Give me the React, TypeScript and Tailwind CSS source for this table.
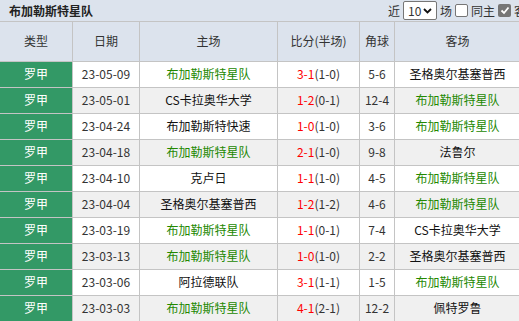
import React from "react";

type Row = {
  date: string;
  home: string;
  homeHit?: boolean;
  ft: string;
  ht: string;
  corner: string;
  away: string;
  awayHit?: boolean;
};

const rows: Row[] = [
  { date: "23-05-09", home: "布加勒斯特星队", homeHit: true, ft: "3-1", ht: "(1-0)", corner: "5-6", away: "圣格奥尔基塞普西" },
  { date: "23-05-01", home: "CS卡拉奥华大学", ft: "1-2", ht: "(0-1)", corner: "12-4", away: "布加勒斯特星队", awayHit: true },
  { date: "23-04-24", home: "布加勒斯特快速", ft: "1-0", ht: "(1-0)", corner: "3-6", away: "布加勒斯特星队", awayHit: true },
  { date: "23-04-18", home: "布加勒斯特星队", homeHit: true, ft: "2-1", ht: "(1-0)", corner: "9-8", away: "法鲁尔" },
  { date: "23-04-10", home: "克卢日", ft: "1-1", ht: "(1-0)", corner: "4-5", away: "布加勒斯特星队", awayHit: true },
  { date: "23-04-04", home: "圣格奥尔基塞普西", ft: "1-2", ht: "(1-2)", corner: "4-6", away: "布加勒斯特星队", awayHit: true },
  { date: "23-03-19", home: "布加勒斯特星队", homeHit: true, ft: "1-1", ht: "(0-1)", corner: "7-4", away: "CS卡拉奥华大学" },
  { date: "23-03-13", home: "布加勒斯特星队", homeHit: true, ft: "1-0", ht: "(1-0)", corner: "2-2", away: "圣格奥尔基塞普西" },
  { date: "23-03-06", home: "阿拉德联队", ft: "3-1", ht: "(1-1)", corner: "1-5", away: "布加勒斯特星队", awayHit: true },
  { date: "23-03-03", home: "布加勒斯特星队", homeHit: true, ft: "4-1", ht: "(2-1)", corner: "12-2", away: "佩特罗鲁" },
];

const cell = "border border-[#c4c4c4] text-center p-0";

export default function App() {
  return (
    <div
      className="w-[519px] h-[321px] overflow-hidden bg-white text-[12px] text-[#333]"
      style={{ fontFamily: '"Noto Sans CJK SC", "Liberation Sans", sans-serif' }}
    >
      <div className="flex items-center h-[22px] bg-[#dce3ed] border-b border-[#c4c4c4] whitespace-nowrap">
        <div className="w-[388px] shrink-0 pl-[9px] font-bold text-[#222]">布加勒斯特星队</div>
        <div className="flex items-center shrink-0 gap-[3px] text-[#333]">
          <span>近</span>
          <div className="flex items-center justify-between w-[34px] h-[19px] bg-white border border-[#767676] rounded-[2px] px-[4px] text-[12px]">
            <span>10</span>
            <svg width="9" height="6" viewBox="0 0 9 6">
              <path d="M1 1l3.5 3.5L8 1" stroke="#111" strokeWidth="1.8" fill="none" />
            </svg>
          </div>
          <span>场</span>
          <span className="w-[13px] h-[13px] bg-white border border-[#767676] rounded-[2px]" />
          <span>同主</span>
          <span className="flex items-center justify-center w-[13px] h-[13px] bg-[#767676] rounded-[2px]">
            <svg width="10" height="9" viewBox="0 0 10 9">
              <path d="M1.5 4.5l2.5 2.5 4.5-5.5" stroke="#fff" strokeWidth="1.8" fill="none" />
            </svg>
          </span>
          <span>客场</span>
        </div>
      </div>
      <table className="border-collapse table-fixed w-[521px] -ml-px">
        <colgroup>
          <col className="w-[73px]" />
          <col className="w-[67px]" />
          <col className="w-[138px]" />
          <col className="w-[82px]" />
          <col className="w-[35px]" />
          <col className="w-[126px]" />
        </colgroup>
        <thead>
          <tr className="h-[39px] bg-[#dce3ed]">
            <th className={`${cell} border-t-0 font-normal`}>类型</th>
            <th className={`${cell} border-t-0 font-normal`}>日期</th>
            <th className={`${cell} border-t-0 font-normal`}>主场</th>
            <th className={`${cell} border-t-0 font-normal`}>比分(半场)</th>
            <th className={`${cell} border-t-0 font-normal`}>角球</th>
            <th className={`${cell} border-t-0 font-normal`}>客场</th>
          </tr>
        </thead>
        <tbody>
          {rows.map((r, i) => (
            <tr key={i} className={`h-[26px] ${i % 2 === 1 ? "bg-[#f0f0f0]" : "bg-white"}`}>
              <td className={`${cell} bg-[#339966] text-white`}>罗甲</td>
              <td className={cell}>{r.date}</td>
              <td className={`${cell} whitespace-nowrap ${r.homeHit ? "text-[#228800]" : "text-[#111]"}`}>{r.home}</td>
              <td className={cell}>
                <span className="text-[#ff0000]">{r.ft}</span>
                {r.ht}
              </td>
              <td className={cell}>{r.corner}</td>
              <td className={`${cell} whitespace-nowrap ${r.awayHit ? "text-[#228800]" : "text-[#111]"}`}>{r.away}</td>
            </tr>
          ))}
        </tbody>
      </table>
    </div>
  );
}
